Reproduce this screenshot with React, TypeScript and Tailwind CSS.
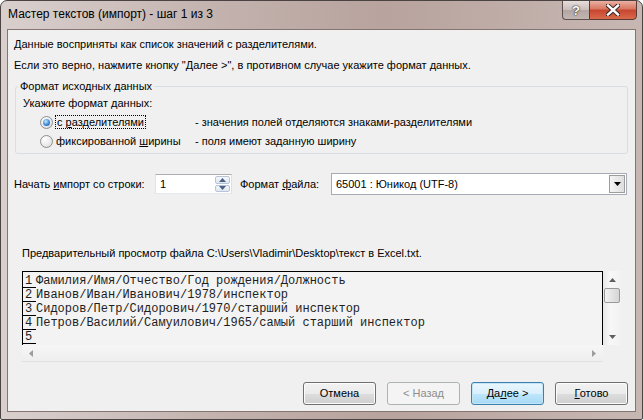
import React from "react";

const ui = "font-['Liberation_Sans',Arial,sans-serif]";

const Radio = ({ checked }: { checked?: boolean }) => (
  <span className="w-[13px] h-[13px] shrink-0 rounded-full border border-[#8e8f8f] bg-[radial-gradient(circle_at_35%_30%,#ffffff,#e9e9e9_60%,#cfcfcf)] flex items-center justify-center">
    {checked && (
      <span className="w-[7px] h-[7px] rounded-full bg-[radial-gradient(circle_at_40%_35%,#c6ecff,#3a8ad6_55%,#1b529a)]" />
    )}
  </span>
);

const Button = ({
  children,
  primary,
  disabled,
}: {
  children: React.ReactNode;
  primary?: boolean;
  disabled?: boolean;
}) => {
  let cls =
    "w-[73px] h-[23px] rounded-[3px] border flex items-center justify-center leading-none ";
  if (disabled) cls += "border-[#adb2b5] bg-[#f4f4f4] text-[#8d8d8d]";
  else if (primary)
    cls +=
      "border-[#3c7fb1] bg-[linear-gradient(#eaf6fd,#d9f0fc_50%,#bee6fd_51%,#a7d9f5)] shadow-[inset_0_0_0_1px_#c4e5f6] text-black";
  else
    cls +=
      "border-[#707070] bg-[linear-gradient(#f2f2f2,#ebebeb_50%,#dddddd_51%,#cfcfcf)] shadow-[inset_0_0_0_1px_#fcfcfc] text-black";
  return <div className={cls}>{children}</div>;
};

const Tri = ({ dir, color }: { dir: "up" | "down" | "left" | "right"; color: string }) => {
  const pts = {
    up: "0,4 7,4 3.5,0",
    down: "0,0 7,0 3.5,4",
    left: "4,0 4,7 0,3.5",
    right: "0,0 0,7 4,3.5",
  }[dir];
  const w = dir === "up" || dir === "down" ? 7 : 4;
  const h = dir === "up" || dir === "down" ? 4 : 7;
  return (
    <svg width={w} height={h} viewBox={`0 0 ${w} ${h}`}>
      <polygon points={pts} fill={color} />
    </svg>
  );
};

const rows = [
  "Фамилия/Имя/Отчество/Год рождения/Должность",
  "Иванов/Иван/Иванович/1978/инспектор",
  "Сидоров/Петр/Сидорович/1970/старший инспектор",
  "Петров/Василий/Самуилович/1965/самый старший инспектор",
  "",
];

export default function App() {
  return (
    <div
      className={`${ui} w-[643px] h-[420px] flex flex-col border border-[#4b4341] rounded-t-[7px] rounded-b-[2px] overflow-hidden bg-[linear-gradient(90deg,#d9d0ce,#c2b1ad_35%,#b8a39e_60%,#c7b7b3)] text-[11px] text-black whitespace-nowrap`}
    >
      {/* title bar */}
      <div className="h-[28px] flex items-start pl-[7px] pr-[5px]">
        <div className="pt-[5px] leading-[16px] text-[12px]">
          Мастер текстов (импорт) - шаг 1 из 3
        </div>
        <div className="ml-auto flex -mt-px">
          <div className="w-[27px] h-[20px] border border-[#5c4f4c] border-r-0 rounded-bl-[4px] bg-[linear-gradient(#e6dedc,#c9bdb9_50%,#b3a6a2_51%,#c2b6b3)] flex items-center justify-center text-white font-bold text-[13px] leading-none [text-shadow:0_0_2px_#2d2d2d,0_0_1px_#000]">
            ?
          </div>
          <div className="w-[48px] h-[20px] border border-[#5c3a33] rounded-br-[4px] bg-[linear-gradient(#eab0a2,#d7755f_45%,#c7452f_50%,#d96a4c)] flex items-center justify-center">
            <svg width="14" height="12" viewBox="0 0 14 12">
              <path d="M2 1.5 L12 10.5 M12 1.5 L2 10.5" stroke="#3a2522" strokeWidth="4.4" strokeLinecap="square" />
              <path d="M2 1.5 L12 10.5 M12 1.5 L2 10.5" stroke="#ffffff" strokeWidth="2.4" strokeLinecap="square" />
            </svg>
          </div>
        </div>
      </div>

      {/* client area */}
      <div className="mx-[6px] flex-1 mb-[7px] border border-[#857571] bg-[#f0f0f0] flex flex-col">
        <p className="pl-[6px] pt-[6px] leading-[16px]">
          Данные восприняты как список значений с разделителями.
        </p>
        <p className="pl-[6px] mt-[5px] leading-[16px]">
          Если это верно, нажмите кнопку "Далее &gt;", в противном случае укажите формат данных.
        </p>

        <fieldset className="mx-[7px] mt-[5px] border border-[#d5dfe5] rounded-[3px] px-[7px] pb-[2px]">
          <legend className="ml-[-5px] px-[2px] leading-[16px]">Формат исходных данных</legend>
          <div className="leading-[19px]">Укажите формат данных:</div>
          <div className="h-[19px] flex items-center pl-[17px]">
            <Radio checked />
            <span className="ml-[2px] w-[140px]">
              <span className="border border-dotted border-black px-px leading-[14px]">
                с <u>р</u>азделителями
              </span>
            </span>
            <span>- значения полей отделяются знаками-разделителями</span>
          </div>
          <div className="h-[19px] flex items-center pl-[17px]">
            <Radio />
            <span className="ml-[3px] w-[139px]">
              фиксированной <u>ш</u>ирины
            </span>
            <span>- поля имеют заданную ширину</span>
          </div>
        </fieldset>

        {/* import row */}
        <div className="mt-[19px] h-[22px] flex items-center pl-[6px]">
          <span className="w-[141px]">
            Начать <u>и</u>мпорт со строки:
          </span>
          <div className="w-[77px] h-[20px] border border-[#abadb3] border-b-[#e3e9ef] border-l-[#e2e3ea] border-r-[#dbdfe6] bg-white flex items-center">
            <span className="pl-[4px] flex-1">1</span>
            <div className="w-[16px] h-full flex flex-col py-px pr-px gap-px">
              <div className="flex-1 border border-[#b7c5d6] rounded-[2px] bg-[linear-gradient(#f5f8fc,#dfe7f1)] flex items-center justify-center">
                <Tri dir="up" color="#4c607f" />
              </div>
              <div className="flex-1 border border-[#b7c5d6] rounded-[2px] bg-[linear-gradient(#f5f8fc,#dfe7f1)] flex items-center justify-center">
                <Tri dir="down" color="#4c607f" />
              </div>
            </div>
          </div>
          <span className="ml-[8px] w-[91px]">
            Формат <u>ф</u>айла:
          </span>
          <div className="w-[296px] h-[22px] border border-[#a5acb5] bg-white flex items-center">
            <span className="pl-[4px] flex-1">65001 : Юникод (UTF-8)</span>
            <div className="w-[16px] h-[18px] mr-px border border-[#9d9d9d] bg-[linear-gradient(90deg,#f4f4f4,#dedede)] flex items-center justify-center">
              <Tri dir="down" color="#000000" />
            </div>
          </div>
        </div>

        <p className="pl-[14px] mt-[50px] leading-[16px]">
          Предварительный просмотр файла C:\Users\Vladimir\Desktop\текст в Excel.txt.
        </p>

        {/* preview */}
        <div className="ml-[14px] mt-[10px] w-[599px] h-[91px] grid grid-cols-[581px_18px] grid-rows-[74px_17px]">
          <div className="border-t border-l border-r border-black bg-[#f3f3f3] overflow-hidden pt-[2px] font-['Liberation_Mono',monospace] text-[12px] text-[#1e1e1e]">
            {rows.map((r, i) => (
              <div key={i} className="h-[14px] flex leading-[14px] whitespace-pre">
                <span className="w-[13px] pl-[2px] border-b border-black shrink-0">{i + 1}</span>
                <span>{r}</span>
              </div>
            ))}
            <div className="w-[13px] h-[20px]" />
          </div>
          <div className="bg-[linear-gradient(90deg,#e8e8e8,#f7f7f7_40%,#f2f2f2)] flex flex-col items-center">
            <div className="h-[17px] flex items-center justify-center">
              <Tri dir="up" color="#606060" />
            </div>
            <div className="w-[16px] h-[15px] rounded-[2px] border border-[#9a9a9a] bg-[linear-gradient(90deg,#f4f4f4,#e3e3e3_50%,#d6d6d6)]" />
            <div className="flex-1" />
            <div className="h-[17px] flex items-center justify-center">
              <Tri dir="down" color="#606060" />
            </div>
          </div>
          <div className="bg-[linear-gradient(#f6f6f6,#eeeeee)] border-b border-[#e2e2e2] flex items-center justify-between px-[7px]">
            <Tri dir="left" color="#9c9c9c" />
            <Tri dir="right" color="#9c9c9c" />
          </div>
          <div className="bg-[#f0f0f0]" />
        </div>

        <div className="mt-[20px] flex justify-end gap-[11px] pr-[7px]">
          <Button>Отмена</Button>
          <Button disabled>&lt; Назад</Button>
          <Button primary>
            <span>
              Да<u>л</u>ее &gt;
            </span>
          </Button>
          <Button>
            <span>
              <u>Г</u>отово
            </span>
          </Button>
        </div>
      </div>
    </div>
  );
}
